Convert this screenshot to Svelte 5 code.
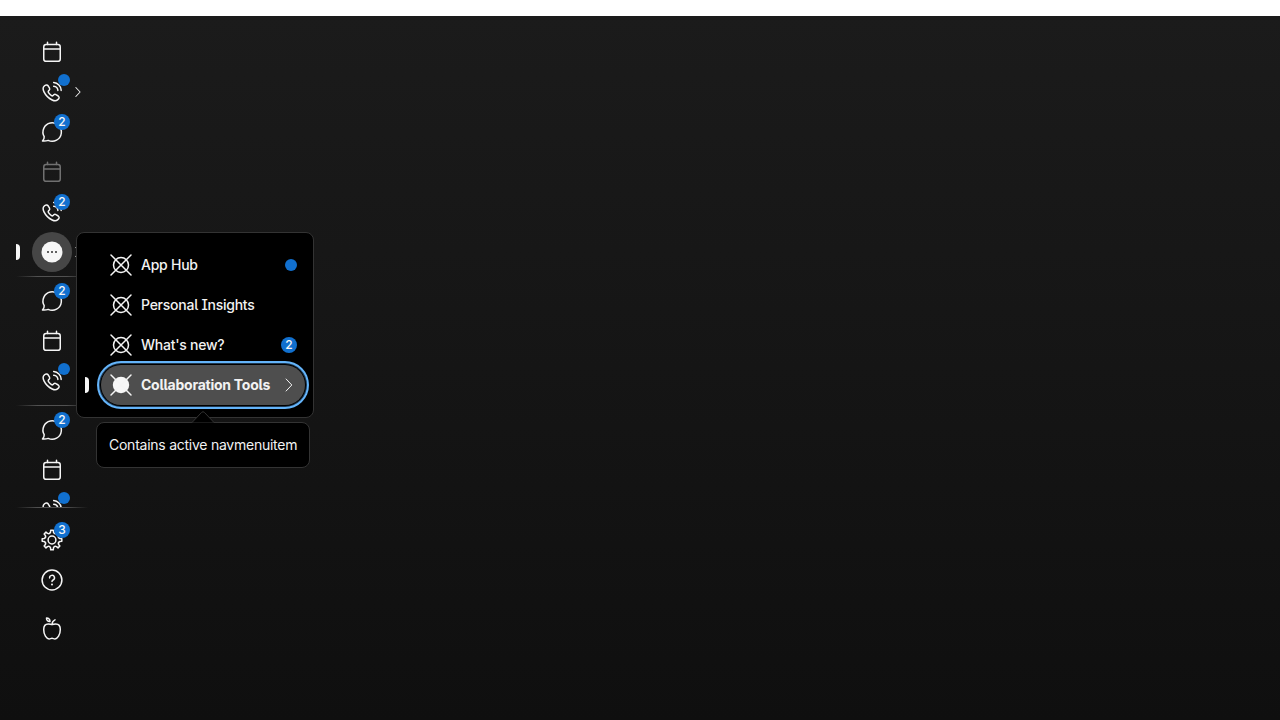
<script>
  const groups = [
    [
      { icon: 'calendar' },
      { icon: 'phone', dot: true, arrow: true },
      { icon: 'chat', count: 2 },
      { icon: 'calendar', disabled: true },
      { icon: 'phone', count: 2 },
      { icon: 'more', active: true, arrow: true }
    ],
    [{ icon: 'chat', count: 2 }, { icon: 'calendar' }, { icon: 'phone', dot: true }],
    [{ icon: 'chat', count: 2 }, { icon: 'calendar' }, { icon: 'phone', dot: true }]
  ];
  const footer = [{ icon: 'gear', count: 3 }, { icon: 'help' }];
  const menu = [
    { label: 'App Hub', dot: true },
    { label: 'Personal Insights' },
    { label: "What's new?", count: 2 },
    { label: 'Collaboration Tools', active: true }
  ];

  // Cog outline: eight narrow teeth joined by rounded valleys.
  function gearPath() {
    const at = (deg, r) => {
      const t = ((deg - 90) * Math.PI) / 180;
      return `${(12 + r * Math.cos(t)).toFixed(2)} ${(12 + r * Math.sin(t)).toFixed(2)}`;
    };
    let d = '';
    for (let i = 0; i < 8; i++) {
      const a = i * 45;
      d += `${i ? 'L' : 'M'}${at(a - 10.5, 8)}L${at(a - 7.5, 9.9)}L${at(a + 7.5, 9.9)}L${at(a + 10.5, 8)}Q${at(a + 22.5, 6.2)} ${at(a + 34.5, 8)}`;
    }
    return d + 'Z';
  }
  const gear = gearPath();
</script>

{#snippet glyph(name)}
  <svg class="icon" viewBox="0 0 24 24" width="24" height="24" aria-hidden="true">
    {#if name === 'calendar'}
      <rect x="3.75" y="4.5" width="16.5" height="16.8" rx="2.4" />
      <path d="M3.75 9H20.25M7.5 2.2V4.5M16.5 2.2V4.5" />
    {:else if name === 'phone'}
      <path d="M4.9 5.5C6 4.6 7.4 4.8 8.1 5.8L9.4 7.9C9.9 8.8 9.8 9.6 9.2 10.2L8.5 10.9C8.1 11.4 8.1 12 8.5 12.6C9.3 13.8 10.3 14.8 11.5 15.6C12.1 16 12.7 15.9 13.1 15.5L13.8 14.8C14.4 14.2 15.3 14.1 16 14.6L18.2 16C19.3 16.8 19.4 18 18.6 18.9L17.5 19.9C16.3 21 14.4 21.1 12.2 20C8.6 18.2 5.7 15.3 4 11.8C2.9 9.6 2.9 7.5 4.1 6.3Z" />
      <path d="M13.7 6.2A4.6 4.6 0 0 1 17.9 10.4M13.7 2.6A8.2 8.2 0 0 1 21.2 10.4" />
    {:else if name === 'chat'}
      <path d="M4.2 16.7A9.2 9.2 0 1 1 8.2 20.4C6.5 21 4.4 21.2 2.5 21C3.7 19.7 4.3 18.3 4.2 16.7Z" />
    {:else if name === 'more'}
      <circle class="solid" cx="12" cy="12" r="10.5" />
      <g class="dark"><circle cx="8" cy="12" r="1" /><circle cx="12" cy="12" r="1" /><circle cx="16" cy="12" r="1" /></g>
    {:else if name === 'gear'}
      <path d={gear} />
      <circle cx="12" cy="12" r="3.9" />
    {:else if name === 'help'}
      <circle cx="12" cy="12" r="9.9" />
      <path d="M9.6 9.9A2.45 2.45 0 1 1 13.1 12C12.3 12.4 12 12.8 12 13.6" />
      <circle class="solid" cx="12" cy="16.4" r="1" />
    {:else if name === 'apple'}
      <path d="M12 7.6C10.7 7.6 10 6.9 8.2 6.9C5.4 6.9 3.7 9.2 3.7 12.5C3.7 17.8 6.5 21.9 9.1 21.9C10.4 21.9 10.8 21.3 12 21.3C13.2 21.3 13.6 21.9 14.9 21.9C17.5 21.9 20.3 17.8 20.3 12.5C20.3 9.2 18.6 6.9 15.8 6.9C14 6.9 13.3 7.6 12 7.6ZM12 7.6C12.1 5.3 13.2 3.7 15 2.9M10 4.4C7.9 4.5 6.4 3.4 6.5 1.1C8.8 1.1 10.1 2.3 10 4.4Z" />
    {:else if name === 'tool' || name === 'tool-filled'}
      <circle class:solid={name === 'tool-filled'} cx="12" cy="12" r={name === 'tool' ? 7.5 : 8.2} />
      <path d="M2 2L22 22M22 2L2 22" />
    {/if}
  </svg>
{/snippet}

{#snippet chevron()}
  <svg class="chevron" viewBox="0 0 16 16" width="16" height="16" aria-hidden="true"><path d="M5.1 2L10.8 8L5.1 14" /></svg>
{/snippet}

{#snippet navItem(item)}
  <div class="nav-item" class:active={item.active} class:disabled={item.disabled}>
    {#if item.active}<span class="marker"></span>{/if}
    <div class="round">
      {@render glyph(item.icon)}
      {#if item.dot}<span class="badge dot"></span>{/if}
      {#if item.count}<span class="badge">{item.count}</span>{/if}
    </div>
    {#if item.arrow}<span class="arrow">{@render chevron()}</span>{/if}
  </div>
{/snippet}

<main>
  <nav>
    <div class="scroll">
      {#each groups as group, i}
        {#if i > 0}<hr />{/if}
        {#each group as item}{@render navItem(item)}{/each}
      {/each}
    </div>
    <hr class="end" />
    <div class="footer">
      {#each footer as item}{@render navItem(item)}{/each}
    </div>
    <div class="brand">{@render glyph('apple')}</div>
  </nav>

  <div class="popover" role="menu">
    {#each menu as item}
      <div class="menu-item" class:selected={item.active} role="menuitem" tabindex="-1">
        {#if item.active}<span class="marker"></span>{/if}
        {@render glyph(item.active ? 'tool-filled' : 'tool')}
        <span class="label">{item.label}</span>
        {#if item.dot}<span class="pill dot"></span>{/if}
        {#if item.count}<span class="pill">{item.count}</span>{/if}
        {#if item.active}{@render chevron()}{/if}
      </div>
    {/each}
  </div>

  <div class="tooltip" role="tooltip">
    <svg class="tip" width="24" height="12" viewBox="0 0 24 12" aria-hidden="true"><path d="M0 11.5H1L10.6 1.4Q12 0 13.4 1.4L23 11.5H24" /></svg>
    Contains active navmenuitem
  </div>
</main>

<style>
  :global(body) {
    background: #fff;
    overflow: hidden;
  }
  main {
    position: relative;
    box-sizing: border-box;
    height: 704px;
    margin-top: 16px;
    padding: 16px 0 0 16px;
    background: linear-gradient(#1b1b1b, #0f0f0f);
    color: #f2f2f2;
    font: 500 14px/20px Inter, sans-serif;
    font-feature-settings: 'ss02';
    letter-spacing: -0.25px;
  }
  nav {
    width: 72px;
  }
  .scroll {
    height: 475px;
    overflow: hidden;
  }
  hr {
    height: 1px;
    margin: 4px 0;
    border: 0;
    background: linear-gradient(90deg, transparent, #515151 30%, #515151 70%, transparent);
  }
  hr.end {
    margin: 0;
  }
  .nav-item {
    position: relative;
    display: flex;
    align-items: center;
    height: 40px;
    padding-left: 16px;
  }
  .round {
    position: relative;
    display: grid;
    place-items: center;
    width: 40px;
    height: 40px;
    border-radius: 50%;
  }
  .active .round {
    background: #464646;
  }
  .disabled {
    opacity: 0.4;
  }
  .marker {
    position: absolute;
    left: 0;
    top: 12px;
    width: 4px;
    height: 16px;
    border-radius: 0 4px 4px 0;
    background: #f7f7f7;
  }
  .icon {
    display: block;
    flex: none;
    fill: none;
    stroke: #f5f5f5;
    stroke-width: 1.5;
    stroke-linecap: round;
    stroke-linejoin: round;
  }
  .solid {
    fill: #f7f7f7;
    stroke: none;
  }
  .dark circle {
    fill: #303030;
    stroke: none;
  }
  .badge,
  .pill {
    display: grid;
    place-items: center;
    width: 16px;
    height: 16px;
    border-radius: 50%;
    background: #1170cf;
    color: #f7f7f7;
    font-size: 12px;
    font-weight: 500;
    line-height: 16px;
    letter-spacing: 0;
  }
  .badge {
    position: absolute;
    top: 2px;
    left: 22px;
  }
  .dot {
    width: 12px;
    height: 12px;
  }
  .badge.dot {
    top: 2px;
    left: 26px;
  }
  .chevron {
    display: block;
    flex: none;
    fill: none;
    stroke: #f2f2f2;
    stroke-width: 1;
    stroke-linecap: round;
    stroke-linejoin: round;
  }
  .arrow .chevron {
    width: 12px;
    height: 12px;
    stroke-width: 1.35;
  }
  .footer {
    padding-top: 12px;
  }
  .brand {
    padding: 17px 0 0 24px;
  }
  .popover {
    position: absolute;
    left: 76px;
    top: 216px;
    box-sizing: border-box;
    width: 238px;
    height: 186px;
    padding: 12px 8px 0 24px;
    border: 1px solid #333;
    border-radius: 8px;
    background: #000;
  }
  .menu-item {
    position: relative;
    display: flex;
    align-items: center;
    gap: 8px;
    height: 40px;
    padding: 0 8px;
    border-radius: 20px;
  }
  .label {
    flex: 1;
    white-space: nowrap;
  }
  .selected {
    background: #4e4e4e;
    box-shadow: 0 0 0 1px #000, 0 0 0 2px #1e3850, 0 0 0 4px #64b4fa;
    font-weight: 700;
  }
  .selected .marker {
    left: -16px;
  }
  .tooltip {
    position: absolute;
    left: 96px;
    top: 406px;
    box-sizing: border-box;
    width: 214px;
    height: 46px;
    padding: 12px;
    border: 1px solid #333;
    border-radius: 8px;
    background: #000;
    font-weight: 400;
    white-space: nowrap;
  }
  .tip {
    position: absolute;
    left: 94px;
    top: -12px;
    fill: #000;
    stroke: #333;
  }
</style>
